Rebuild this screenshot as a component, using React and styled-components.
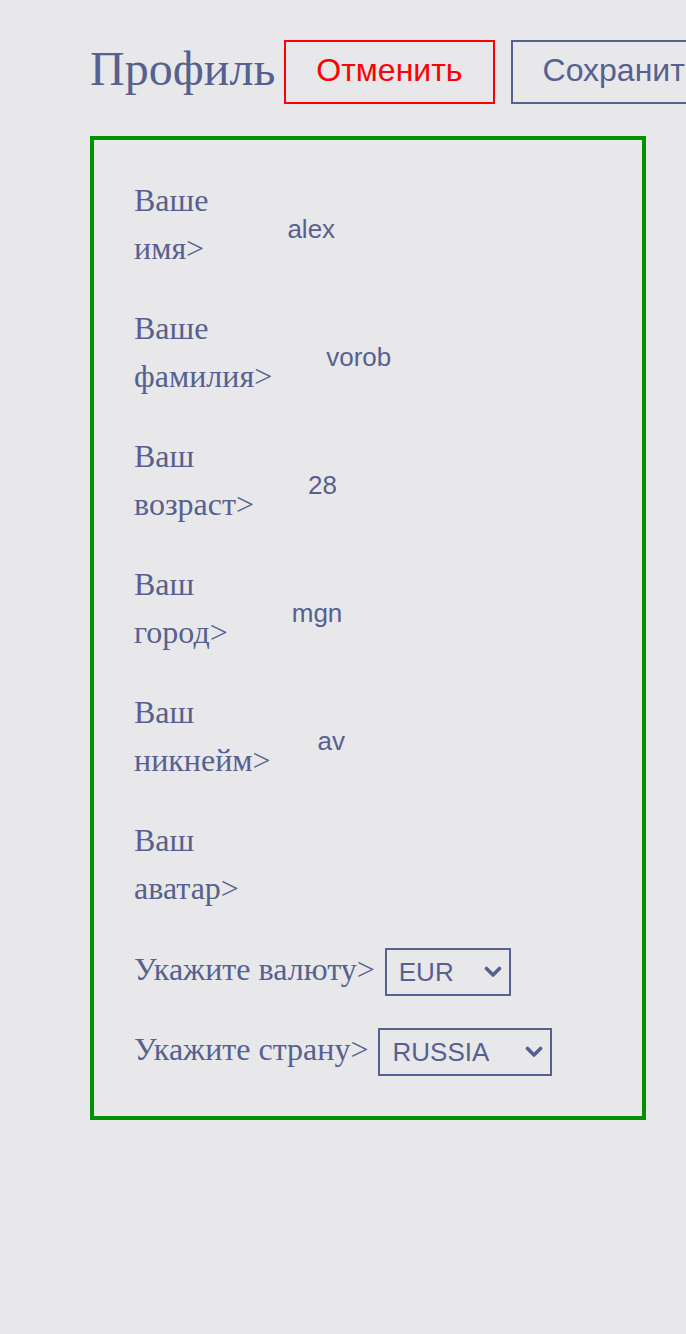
import React from "react";
import styled, { createGlobalStyle } from "styled-components";

const GlobalStyle = createGlobalStyle`
  html, body {
    margin: 0;
    padding: 0;
    background: #e8e8ea;
    overflow-x: hidden;
  }
  body {
    font-family: "Liberation Serif", serif;
    color: #56618f;
  }
`;

const Page = styled.div`
  padding: 40px 0 0 90px;
  width: 686px;
  box-sizing: border-box;
  overflow: hidden;
`;

const Header = styled.header`
  display: flex;
  align-items: center;
  white-space: nowrap;
`;

const Title = styled.h1`
  margin: 0 9px 6px 0;
  font-family: "Liberation Serif", serif;
  font-weight: 400;
  font-size: 48px;
  line-height: 58px;
  color: #56618f;
`;

const Button = styled.button`
  flex: none;
  height: 64px;
  padding: 0 30px 4px;
  margin-right: 16px;
  background: transparent;
  border: 2px solid ${(p) => (p.$danger ? "#ff0000" : "#56618f")};
  color: ${(p) => (p.$danger ? "#ff0000" : "#56618f")};
  font-family: "Liberation Sans", Arial, sans-serif;
  font-size: 32px;
  cursor: pointer;
`;

const Card = styled.section`
  margin-top: 32px;
  width: 556px;
  box-sizing: border-box;
  border: 4px solid #009100;
  padding: 36px 40px 40px;
  display: flex;
  flex-direction: column;
  gap: 32px;
`;

const Row = styled.div`
  display: flex;
  align-items: center;
`;

const Label = styled.span`
  width: min-content;
  font-family: "Liberation Serif", serif;
  font-size: 32px;
  line-height: 48px;
  white-space: normal;
`;

const Value = styled.span`
  margin-left: ${(p) => p.$offset}px;
  padding-top: 9px;
  font-family: "Liberation Sans", Arial, sans-serif;
  font-size: 26px;
  line-height: 32px;
`;

const SelectRow = styled.div`
  display: flex;
  align-items: flex-start;
  margin-top: ${(p) => (p.$first ? 4 : 0)}px;
  gap: 10px;
`;

const SelectLabel = styled.span`
  font-family: "Liberation Serif", serif;
  font-size: 32px;
  line-height: 42px;
  white-space: nowrap;
`;

const SelectWrap = styled.div`
  position: relative;
  display: inline-flex;
`;

const Select = styled.select`
  appearance: none;
  -webkit-appearance: none;
  width: ${(p) => p.$width}px;
  height: 48px;
  box-sizing: border-box;
  margin: 0;
  padding: 0 0 0 12px;
  border: 2px solid #56618f;
  border-radius: 0;
  background: transparent;
  color: #56618f;
  font-family: "Liberation Sans", Arial, sans-serif;
  font-size: 26px;
  outline: none;
`;

const Chevron = styled.svg`
  position: absolute;
  right: 9px;
  top: 18px;
  width: 18px;
  height: 12px;
  pointer-events: none;
`;

const fields = [
  { label: "Ваше имя>", value: "alex", offset: 79 },
  { label: "Ваше фамилия>", value: "vorob", offset: 54 },
  { label: "Ваш возраст>", value: "28", offset: 54 },
  { label: "Ваш город>", value: "mgn", offset: 64 },
  { label: "Ваш никнейм>", value: "av", offset: 47 },
  { label: "Ваш аватар>", value: "", offset: 0 },
];

function Dropdown({ width, options }) {
  return (
    <SelectWrap>
      <Select $width={width} defaultValue={options[0]}>
        {options.map((o) => (
          <option key={o} value={o}>
            {o}
          </option>
        ))}
      </Select>
      <Chevron viewBox="0 0 18 12">
        <polyline
          points="2.5,2.5 9,9 15.5,2.5"
          fill="none"
          stroke="#56618f"
          strokeWidth="3.6"
          strokeLinecap="round"
          strokeLinejoin="round"
        />
      </Chevron>
    </SelectWrap>
  );
}

export default function App() {
  return (
    <>
      <GlobalStyle />
      <Page>
        <Header>
          <Title>Профиль</Title>
          <Button $danger>Отменить</Button>
          <Button>Сохранить</Button>
        </Header>
        <Card>
          {fields.map((f) => (
            <Row key={f.label}>
              <Label>{f.label}</Label>
              {f.value && <Value $offset={f.offset}>{f.value}</Value>}
            </Row>
          ))}
          <SelectRow $first>
            <SelectLabel>Укажите валюту&gt;</SelectLabel>
            <Dropdown width={126} options={["EUR", "USD", "RUB"]} />
          </SelectRow>
          <SelectRow>
            <SelectLabel>Укажите страну&gt;</SelectLabel>
            <Dropdown width={174} options={["RUSSIA", "USA", "GERMANY"]} />
          </SelectRow>
        </Card>
      </Page>
    </>
  );
}
